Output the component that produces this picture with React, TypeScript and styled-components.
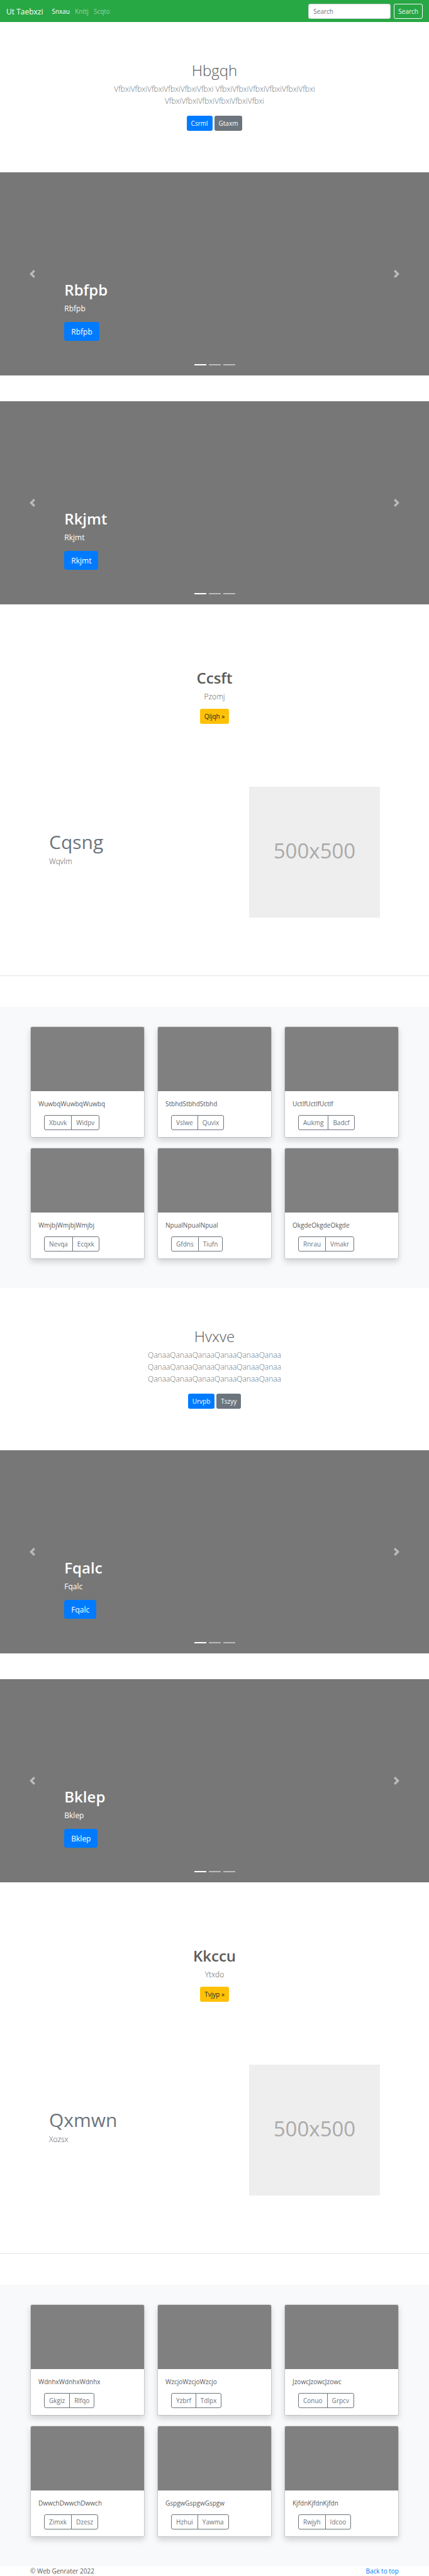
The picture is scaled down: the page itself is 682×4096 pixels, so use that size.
import React from 'react';
import styled, { createGlobalStyle } from 'styled-components';

const GlobalStyle = createGlobalStyle`
  *, *::before, *::after { box-sizing: border-box; }
  body {
    margin: 0;
    background: #fff;
    color: #5a5a5a;
    font: 400 10px/15px 'Open Sans', 'Noto Sans', sans-serif;
  }
  h1, h2, p { margin: 0; }
  button, input { font: inherit; }
`;

type Tone = 'primary' | 'secondary' | 'warning';

const tones: Record<Tone, { background: string; color: string }> = {
  primary: { background: '#007bff', color: '#fff' },
  secondary: { background: '#6c757d', color: '#fff' },
  warning: { background: '#ffc107', color: '#212529' },
};

const Navbar = styled.nav`
  display: flex;
  align-items: center;
  padding: 6px 10px 5px;
  background: #28a745;
`;

const Brand = styled.a`
  margin-right: 14px;
  color: #fff;
  font-size: 12px;
  line-height: 19px;
  text-decoration: none;
`;

const NavLinks = styled.div`
  display: flex;
  flex: 1;
  gap: 8px;
`;

const NavLink = styled.a<{ $active?: boolean }>`
  color: ${({ $active }) => ($active ? '#fff' : 'rgba(255, 255, 255, 0.5)')};
  text-decoration: none;
`;

const SearchForm = styled.form`
  display: flex;
  gap: 5px;
`;

const SearchInput = styled.input`
  width: 131px;
  height: 24px;
  padding: 0 7px;
  border: 1px solid #ced4da;
  border-radius: 3px;
  background: #fff;
  color: #495057;
  &::placeholder { color: #6c757d; opacity: 1; }
`;

const SearchButton = styled.button`
  height: 24px;
  padding: 0 6px;
  border: 1px solid #f8f9fa;
  border-radius: 3px;
  background: transparent;
  color: #f8f9fa;
`;

const Button = styled.button<{ $tone: Tone; $large?: boolean }>`
  height: ${({ $large }) => ($large ? 30 : 24)}px;
  padding: 0 ${({ $large }) => ($large ? 11 : 7)}px;
  border: 0;
  border-radius: ${({ $large }) => ($large ? 4 : 3)}px;
  font-size: ${({ $large }) => ($large ? 12 : 10)}px;
  background: ${({ $tone }) => tones[$tone].background};
  color: ${({ $tone }) => tones[$tone].color};
`;

const Title = styled.h1<{ $weight: number }>`
  margin-bottom: 5px;
  font-size: 24px;
  line-height: 30px;
  font-weight: ${({ $weight }) => $weight};
`;

const Lead = styled.p`
  font-size: 12px;
  line-height: 19px;
  font-weight: 300;
`;

const HeroSection = styled.section`
  display: flex;
  flex-direction: column;
  align-items: center;
  padding: 62px 20px 66px;
  text-align: center;
`;

const HeroText = styled(Lead)`
  max-width: 385px;
  margin-bottom: 14px;
  color: #6c757d;
`;

const ButtonRow = styled.div`
  display: flex;
  gap: 3px;
`;

const Carousels = styled.div`
  display: flex;
  flex-direction: column;
  gap: 41px;
`;

const Slide = styled.section`
  position: relative;
  padding: 172px 15% 55px;
  background: #777;
  color: #fff;
`;

const SlideText = styled.p`
  margin-bottom: 12px;
  font-size: 12px;
  line-height: 19px;
`;

const SlideControl = styled.button<{ $side: 'left' | 'right' }>`
  position: absolute;
  top: 0;
  bottom: 0;
  ${({ $side }) => $side}: 0;
  display: flex;
  align-items: center;
  justify-content: center;
  width: 15%;
  padding: 0;
  border: 0;
  background: none;
  color: #fff;
  opacity: 0.5;
`;

const Indicators = styled.div`
  position: absolute;
  right: 0;
  bottom: 16px;
  left: 0;
  display: flex;
  justify-content: center;
  gap: 4px;
`;

const Indicator = styled.button<{ $active?: boolean }>`
  width: 19px;
  height: 2px;
  padding: 0;
  border: 0;
  background: #fff;
  opacity: ${({ $active }) => ($active ? 1 : 0.5)};
`;

const Intro = styled.section`
  display: flex;
  flex-direction: column;
  align-items: center;
  padding: 102px 20px 100px;
  text-align: center;
`;

const IntroText = styled(Lead)`
  margin-bottom: 10px;
`;

const Featurette = styled.section`
  display: flex;
  align-items: center;
  justify-content: space-between;
  padding: 0 78px;
`;

const FeatureTitle = styled.h2`
  margin-bottom: 2px;
  color: #6c757d;
  font-size: 30px;
  line-height: 38px;
  font-weight: 400;
`;

const FeatureText = styled(Lead)`
  margin-bottom: 12px;
`;

const Placeholder = styled.div`
  display: flex;
  align-items: center;
  justify-content: center;
  width: 208px;
  height: 208px;
  padding-bottom: 4px;
  background: #eee;
  color: #aaa;
  font-size: 33px;
  line-height: 40px;
`;

const Divider = styled.hr`
  margin: 92px 0 49px;
  border: 0;
  border-top: 1px solid #e5e5e5;
`;

const Album = styled.section`
  display: grid;
  grid-template-columns: repeat(3, 1fr);
  gap: 16px 20px;
  padding: 31px 48px 46px;
  background: #f8f9fa;
`;

const Card = styled.article`
  overflow: hidden;
  border: 1px solid rgba(0, 0, 0, 0.125);
  border-radius: 3px;
  background: #fff;
  background-clip: padding-box;
  box-shadow: 0 5px 10px rgba(0, 0, 0, 0.15);
`;

const CardImage = styled.div`
  height: 102px;
  background: #808080;
`;

const CardBody = styled.div`
  padding: 13px 12px 11px;
`;

const CardText = styled.p`
  margin-bottom: 10px;
`;

const ButtonGroup = styled.div`
  display: flex;
  margin-left: 9px;
`;

const OutlineButton = styled.button`
  height: 24px;
  padding: 0 7px;
  border: 1px solid #6c757d;
  background: transparent;
  color: #6c757d;
  &:first-child { border-radius: 3px 0 0 3px; }
  &:last-child { margin-left: -1px; border-radius: 0 3px 3px 0; }
`;

const Footer = styled.footer`
  display: flex;
  justify-content: space-between;
  padding: 1px 48px 0;
`;

const TopLink = styled.a`
  color: #007bff;
  text-decoration: none;
`;

function Chevron({ d }: { d: string }) {
  return (
    <svg width="13" height="13" viewBox="0 0 8 8" fill="currentColor" aria-hidden="true">
      <path d={d} />
    </svg>
  );
}

function Hero({ title, text, actions }: { title: string; text: string; actions: [string, string] }) {
  return (
    <HeroSection>
      <Title $weight={300}>{title}</Title>
      <HeroText>{text}</HeroText>
      <ButtonRow>
        <Button $tone="primary">{actions[0]}</Button>
        <Button $tone="secondary">{actions[1]}</Button>
      </ButtonRow>
    </HeroSection>
  );
}

function Carousel({ label }: { label: string }) {
  return (
    <Slide>
      <Title $weight={600}>{label}</Title>
      <SlideText>{label}</SlideText>
      <Button $tone="primary" $large>{label}</Button>
      <SlideControl $side="left" aria-label="Previous">
        <Chevron d="M5.25 0l-4 4 4 4 1.5-1.5-2.5-2.5 2.5-2.5-1.5-1.5z" />
      </SlideControl>
      <SlideControl $side="right" aria-label="Next">
        <Chevron d="M2.75 0l-1.5 1.5 2.5 2.5-2.5 2.5 1.5 1.5 4-4-4-4z" />
      </SlideControl>
      <Indicators>
        <Indicator $active aria-label="Slide 1" />
        <Indicator aria-label="Slide 2" />
        <Indicator aria-label="Slide 3" />
      </Indicators>
    </Slide>
  );
}

interface ProductProps {
  title: string;
  text: string;
  action: string;
  feature: string;
  featureText: string;
}

function Product({ title, text, action, feature, featureText }: ProductProps) {
  return (
    <>
      <Intro>
        <Title $weight={600}>{title}</Title>
        <IntroText>{text}</IntroText>
        <Button $tone="warning">{action} »</Button>
      </Intro>
      <Featurette>
        <div>
          <FeatureTitle>{feature}</FeatureTitle>
          <FeatureText>{featureText}</FeatureText>
        </div>
        <Placeholder>500x500</Placeholder>
      </Featurette>
      <Divider />
    </>
  );
}

type CardData = [string, string, string];

function CardAlbum({ cards }: { cards: CardData[] }) {
  return (
    <Album>
      {cards.map(([word, first, second]) => (
        <Card key={word}>
          <CardImage />
          <CardBody>
            <CardText>{word.repeat(3)}</CardText>
            <ButtonGroup>
              <OutlineButton>{first}</OutlineButton>
              <OutlineButton>{second}</OutlineButton>
            </ButtonGroup>
          </CardBody>
        </Card>
      ))}
    </Album>
  );
}

const firstAlbum: CardData[] = [
  ['Wuwbq', 'Xbuvk', 'Widpv'],
  ['Stbhd', 'Vslwe', 'Quvix'],
  ['Uctlf', 'Aukmg', 'Badcf'],
  ['Wmjbj', 'Nevqa', 'Ecqxk'],
  ['Npual', 'Gfdns', 'Tiufn'],
  ['Okgde', 'Rnrau', 'Vmakr'],
];

const secondAlbum: CardData[] = [
  ['Wdnhx', 'Gkgiz', 'Rlfqo'],
  ['Wzcjo', 'Yzbrf', 'Tdlpx'],
  ['Jzowc', 'Conuo', 'Grpcv'],
  ['Dwwch', 'Zimxk', 'Dzesz'],
  ['Gspgw', 'Hzhui', 'Yawma'],
  ['Kjfdn', 'Rwjyh', 'Idcoo'],
];

const threeTimes = (word: string) => Array(3).fill(word.repeat(6)).join(' ');

export default function App() {
  return (
    <>
      <GlobalStyle />
      <Navbar id="top">
        <Brand href="#top">Ut Taebxzi</Brand>
        <NavLinks>
          <NavLink href="#top" $active>Snxau</NavLink>
          <NavLink href="#top">Knttj</NavLink>
          <NavLink href="#top">Scqto</NavLink>
        </NavLinks>
        <SearchForm onSubmit={(event) => event.preventDefault()}>
          <SearchInput type="search" placeholder="Search" aria-label="Search" />
          <SearchButton type="submit">Search</SearchButton>
        </SearchForm>
      </Navbar>
      <main>
        <Hero title="Hbgqh" text={threeTimes('Vfbxi')} actions={['Csrml', 'Gtaxm']} />
        <Carousels>
          <Carousel label="Rbfpb" />
          <Carousel label="Rkjmt" />
        </Carousels>
        <Product title="Ccsft" text="Pzomj" action="Qljqh" feature="Cqsng" featureText="Wqvlm" />
        <CardAlbum cards={firstAlbum} />
        <Hero title="Hvxve" text={threeTimes('Qanaa')} actions={['Urvpb', 'Tszyy']} />
        <Carousels>
          <Carousel label="Fqalc" />
          <Carousel label="Bklep" />
        </Carousels>
        <Product title="Kkccu" text="Ytxdo" action="Tvjyp" feature="Qxmwn" featureText="Xozsx" />
        <CardAlbum cards={secondAlbum} />
      </main>
      <Footer>
        <p>© Web Genrater 2022</p>
        <TopLink href="#top">Back to top</TopLink>
      </Footer>
    </>
  );
}
